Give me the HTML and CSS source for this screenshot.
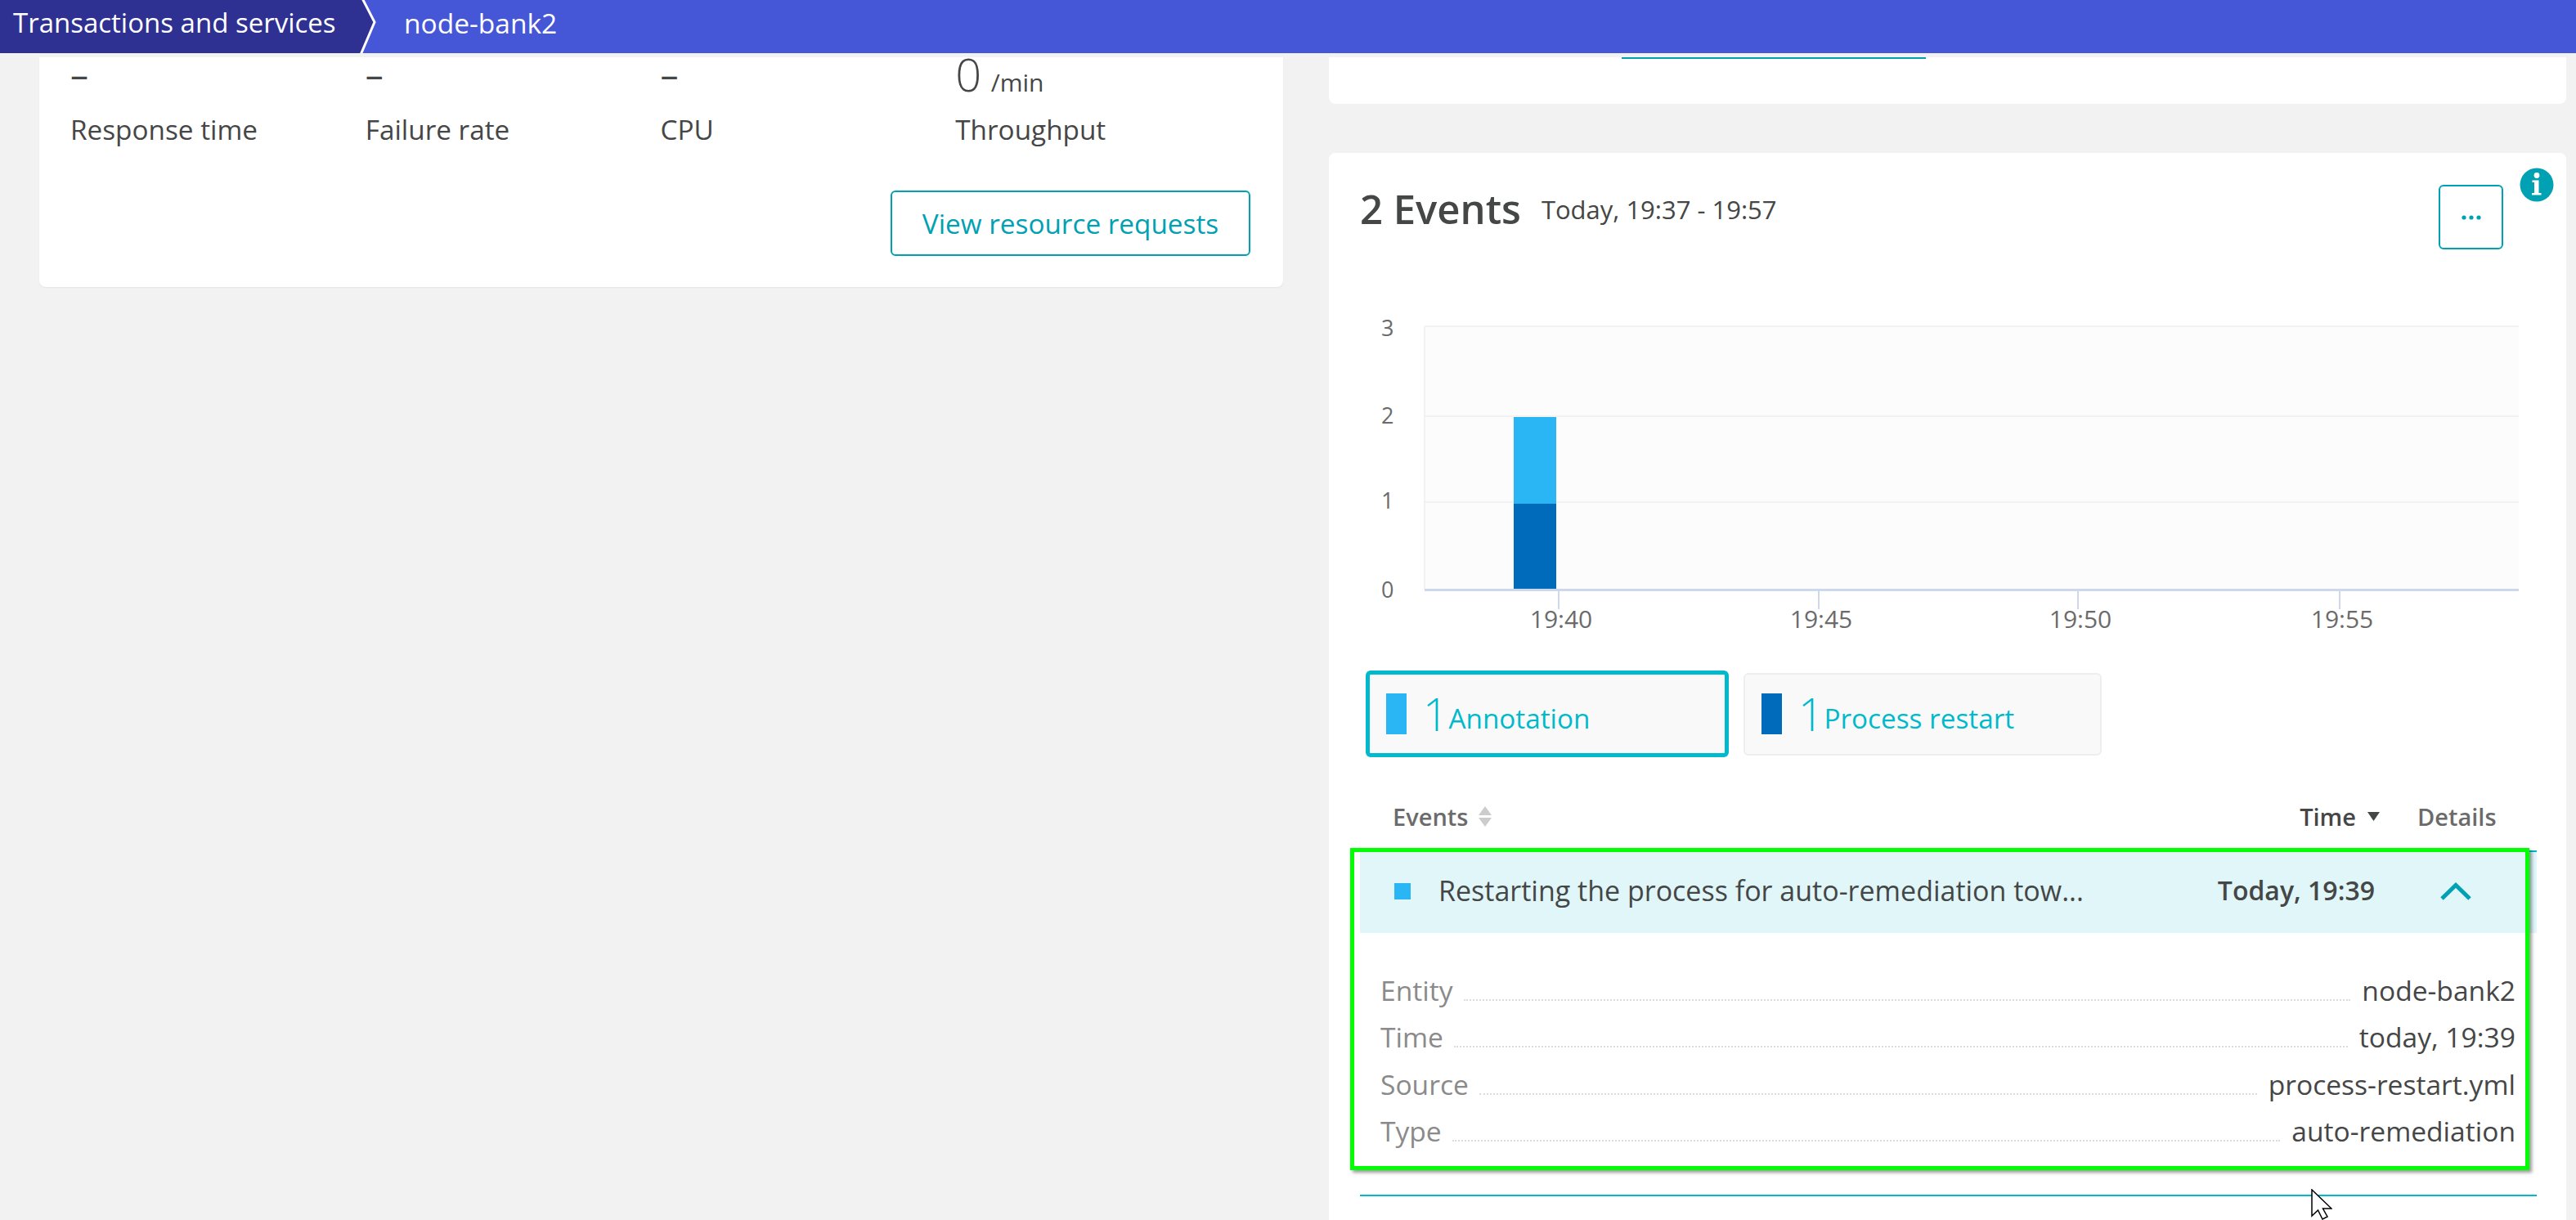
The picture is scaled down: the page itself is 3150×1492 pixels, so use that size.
FILE: index.html
```html
<!DOCTYPE html>
<html lang="en">
<head>
    <meta charset="UTF-8">
    <title>node-bank2</title>
    <link rel="stylesheet" href="styles.css">
</head>
<body>

<header class="crumbs">
    <span class="crumb-first">Transactions and services</span>
    <svg class="crumb-arrow" width="28" height="65" viewBox="0 0 28 65">
        <polygon points="0,0 7,0 22,27 5,65 0,65" fill="#2e3192"/>
        <polyline points="7,-2 22,27 5,67" fill="none" stroke="#fff" stroke-width="3"/>
    </svg>
    <span class="crumb-last">node-bank2</span>
</header>

<div class="page">
    <div class="col-left">
        <section class="card metrics-card">
            <div class="metrics">
                <div class="metric">
                    <div class="metric-value">–</div>
                    <div class="metric-label">Response time</div>
                </div>
                <div class="metric">
                    <div class="metric-value">–</div>
                    <div class="metric-label">Failure rate</div>
                </div>
                <div class="metric">
                    <div class="metric-value">–</div>
                    <div class="metric-label">CPU</div>
                </div>
                <div class="metric">
                    <div class="metric-value"><span class="big-num">0</span> <span class="unit">/min</span></div>
                    <div class="metric-label">Throughput</div>
                </div>
            </div>
            <div class="metrics-actions">
                <button class="btn-outline" type="button">View resource requests</button>
            </div>
        </section>
    </div>

    <div class="col-right">
        <section class="card stub-card">
            <div class="stub-line"></div>
        </section>

        <section class="card events-card">
            <svg class="info-icon" width="42" height="42" viewBox="0 0 42 42">
                <circle cx="21" cy="21" r="20.5" fill="#00a1b2"/>
                <circle cx="21" cy="9.5" r="3.4" fill="#fff"/>
                <path d="M15.5 15.5h8v15.5h3v2.500h-11.500v-2.500h3v-13h-2.500z" fill="#fff"/>
            </svg>

            <div class="events-head">
                <h2 class="events-title">2 Events</h2>
                <span class="events-range">Today, 19:37 - 19:57</span>
                <button class="btn-more" type="button" aria-label="More">
                    <svg width="24" height="8" viewBox="0 0 24 8">
                        <circle cx="3" cy="4" r="2.600" fill="#00a1b2"/>
                        <circle cx="12" cy="4" r="2.600" fill="#00a1b2"/>
                        <circle cx="21" cy="4" r="2.600" fill="#00a1b2"/>
                    </svg>
                </button>
            </div>

            <svg class="chart" width="1513" height="400" viewBox="0 0 1513 400">
                <rect x="117" y="19" width="1338" height="322" fill="#fcfcfc"/>
                <g stroke="#f2f2f2" stroke-width="2" fill="none">
                    <path d="M117 19H1455"/>
                    <path d="M117 129H1455"/>
                    <path d="M117 234H1455"/>
                    <path d="M117 19V341"/>
                </g>
                <rect x="226" y="130" width="52" height="106" fill="#2ab6f4"/>
                <rect x="226" y="236" width="52" height="105" fill="#006bba"/>
                <path d="M117 341.500H1455" stroke="#ced8ec" stroke-width="3"/>
                <g stroke="#ced8ec" stroke-width="2">
                    <path d="M281 342V365"/>
                    <path d="M599 342V365"/>
                    <path d="M916 342V365"/>
                    <path d="M1236 342V365"/>
                </g>
                <g class="chart-text">
                    <text x="64" y="31">3</text>
                    <text x="64" y="138">2</text>
                    <text x="64" y="242">1</text>
                    <text x="64" y="351">0</text>
                </g>
                <g class="chart-text chart-ticks">
                    <text x="284" y="388">19:40</text>
                    <text x="602" y="388">19:45</text>
                    <text x="919" y="388">19:50</text>
                    <text x="1239" y="388">19:55</text>
                </g>
            </svg>

            <div class="tiles">
                <div class="tile tile-active">
                    <span class="swatch swatch-light"></span>
                    <span class="tile-num">1</span>
                    <span class="tile-name">Annotation</span>
                </div>
                <div class="tile">
                    <span class="swatch swatch-dark"></span>
                    <span class="tile-num">1</span>
                    <span class="tile-name">Process restart</span>
                </div>
            </div>

            <div class="table-head">
                <span class="th th-events">Events
                    <svg width="16" height="25" viewBox="0 0 16 25">
                        <polygon points="8,0 16,11 0,11" fill="#ccc"/>
                        <polygon points="8,25 16,14 0,14" fill="#ccc"/>
                    </svg>
                </span>
                <span class="th th-time">Time
                    <svg width="15" height="11" viewBox="0 0 15 11">
                        <polygon points="0,0 15,0 7.500,11" fill="#454646"/>
                    </svg>
                </span>
                <span class="th th-details">Details</span>
            </div>

            <div class="event">
                <div class="event-row">
                    <span class="event-swatch"></span>
                    <span class="event-text">Restarting the process for auto-remediation tow...</span>
                    <span class="event-time">Today, 19:39</span>
                    <svg class="event-chevron" width="38" height="22" viewBox="0 0 38 22">
                        <polyline points="2,20 19,3.500 36,20" fill="none" stroke="#00a1b2" stroke-width="5"/>
                    </svg>
                </div>
                <div class="event-details">
                    <div class="detail"><span class="detail-key">Entity</span><span class="leader"></span><span class="detail-val">node-bank2</span></div>
                    <div class="detail"><span class="detail-key">Time</span><span class="leader"></span><span class="detail-val">today, 19:39</span></div>
                    <div class="detail"><span class="detail-key">Source</span><span class="leader"></span><span class="detail-val">process-restart.yml</span></div>
                    <div class="detail"><span class="detail-key">Type</span><span class="leader"></span><span class="detail-val">auto-remediation</span></div>
                </div>
                <div class="highlight"></div>
            </div>
            <div class="event-end"></div>
        </section>
    </div>

    <svg class="cursor" width="26" height="38" viewBox="0 0 26 38">
        <path d="M1 1V33L8.500 26L14 37L20 34L14.500 24H25Z" fill="#fff" stroke="#000" stroke-width="1.500"/>
    </svg>
</div>

</body>
</html>
```

FILE: styles.css
```css
html, body {
    margin: 0;
    padding: 0;
}

body {
    width: 3150px;
    height: 1492px;
    overflow: hidden;
    background-color: #f2f2f2;
    font-family: "Open Sans", sans-serif;
    color: #454646;
}

/* breadcrumb bar */
.crumbs {
    display: flex;
    height: 65px;
    background-color: #4556d7;
    color: white;
    font-size: 33.5px;
    line-height: 56px;
}

.crumb-first {
    width: 436px;
    padding-left: 16px;
    box-sizing: border-box;
    background-color: #2e3192;
    font-size: 33px;
}

.crumb-arrow {
    flex: none;
}

.crumb-last {
    margin-left: 30px;
}

.page {
    position: relative;
    display: flex;
    height: 1427px;
    padding: 5px 12px 0 48px;
    box-sizing: border-box;
    gap: 56px;
}

.col-left {
    width: 1521px;
    flex: none;
}

.col-right {
    width: 1513px;
    flex: none;
}

.card {
    background-color: white;
    border-radius: 0 0 8px 8px;
}

/* left card */
.metrics-card {
    height: 281px;
    padding: 0 40px 0 38px;
    box-sizing: border-box;
    box-shadow: 0 1px 2px rgba(0, 0, 0, 0.06);
}

.metrics {
    display: flex;
    height: 163px;
}

.metric {
    width: 361px;
}

.metric-value {
    height: 58px;
    font-size: 44px;
    line-height: 40px;
    white-space: nowrap;
}

.big-num {
    font-size: 56px;
    font-weight: 300;
    line-height: 40px;
}

.unit {
    font-size: 30px;
}

.metric-label {
    font-size: 33.3px;
    line-height: 60px;
}

.metrics-actions {
    display: flex;
    justify-content: flex-end;
}

.btn-outline {
    width: 440px;
    height: 80px;
    border: 2px solid #00a1b2;
    border-radius: 6px;
    background-color: white;
    color: #00a1b2;
    font-family: inherit;
    font-size: 33.3px;
}

/* right column */
.stub-card {
    height: 57px;
    position: relative;
}

.stub-line {
    width: 372px;
    height: 2px;
    margin-left: 358px;
    background-color: #00a1b2;
}

.events-card {
    position: relative;
    height: 1305px;
    margin-top: 60px;
    border-radius: 8px 8px 0 0;
}

.info-icon {
    position: absolute;
    top: 18px;
    right: 15px;
}

.events-head {
    display: flex;
    align-items: flex-start;
    height: 193px;
    box-sizing: border-box;
    padding: 38px 77px 0 38px;
}

.events-title {
    margin: 0 25px 0 0;
    font-size: 49px;
    font-weight: 600;
    line-height: 60px;
}

.events-range {
    margin-top: 10px;
    font-size: 31px;
    line-height: 42px;
}

.btn-more {
    width: 79px;
    height: 79px;
    margin: 1px 0 0 auto;
    padding: 0;
    border: 2px solid #00a1b2;
    border-radius: 6px;
    background-color: white;
}

.chart {
    display: block;
}

.chart-text {
    font-family: "Open Sans", sans-serif;
    font-size: 27px;
    fill: #6b6b6b;
}

.chart-ticks {
    font-size: 30px;
    text-anchor: middle;
}

/* event type tiles */
.tiles {
    display: flex;
    align-items: center;
    gap: 18px;
    height: 106px;
    margin: 40px 0 0 45px;
}

.tile {
    display: flex;
    align-items: center;
    width: 438px;
    height: 101px;
    padding-left: 20px;
    box-sizing: border-box;
    border: 2px solid #eeeeee;
    border-radius: 6px;
    background-color: #f9f9f9;
    color: #00b9cc;
}

.tile-active {
    width: 444px;
    height: 106px;
    padding-left: 20px;
    border: 5px solid #00b9cc;
}

.swatch {
    width: 25px;
    height: 50px;
    margin-right: 20px;
}

.swatch-light {
    background-color: #2ab6f4;
}

.swatch-dark {
    background-color: #006bba;
}

.tile-num {
    font-size: 55px;
    font-weight: 300;
    line-height: 60px;
}

.tile-name {
    font-size: 33.3px;
    margin-top: 10px;
}

/* table */
.table-head {
    display: flex;
    align-items: center;
    height: 114px;
    margin: 0 36px 0 38px;
    padding-top: 30px;
    box-sizing: border-box;
    font-size: 29px;
    font-weight: 600;
    color: #6b6b6b;
}

.th-events {
    display: flex;
    align-items: center;
    gap: 13px;
    margin-left: 40px;
}

.th-time {
    display: flex;
    align-items: center;
    gap: 14px;
    margin-left: auto;
    color: #454646;
}

.th-details {
    width: 96px;
    margin: 0 50px 0 46px;
}

.event {
    position: relative;
    margin: 0 36px 0 38px;
    border-top: 2px solid #00b9cc;
}

.event-row {
    display: flex;
    align-items: center;
    height: 99px;
    padding-bottom: 4px;
    box-sizing: border-box;
    background-color: #e0f6f9;
}

.event-swatch {
    width: 20px;
    height: 20px;
    margin: 0 34px 0 42px;
    background-color: #2ab6f4;
}

.event-text {
    font-size: 34px;
    line-height: 44px;
    margin-bottom: 2px;
    white-space: nowrap;
}

.event-time {
    margin-left: auto;
    font-size: 32px;
    line-height: 44px;
    margin-bottom: 2px;
    font-weight: 600;
}

.event-chevron {
    margin: 0 80px 0 80px;
}

.event-details {
    height: 291px;
    padding: 34px 26px 0 25px;
    box-sizing: border-box;
}

.detail {
    display: flex;
    align-items: flex-end;
    height: 57.5px;
    font-size: 33.6px;
    line-height: 44px;
}

.detail-key {
    color: #8a8a8a;
}

.detail-val {
    color: #454646;
}

.leader {
    flex: 1;
    margin: 0 14px 9px 13px;
    border-bottom: 2px dotted #dcdcdc;
}

.event-end {
    height: 2px;
    margin: 29px 36px 0 38px;
    background-color: #00b9cc;
}

/* green annotation box drawn over the expanded row */
.highlight {
    position: absolute;
    top: -5px;
    left: -12px;
    right: 9px;
    height: 394px;
    box-sizing: border-box;
    border: 5px solid #00ff00;
    box-shadow: 3px 3px 4px rgba(0, 0, 0, 0.4);
}

.cursor {
    position: absolute;
    top: 1389px;
    left: 2826px;
}
```
